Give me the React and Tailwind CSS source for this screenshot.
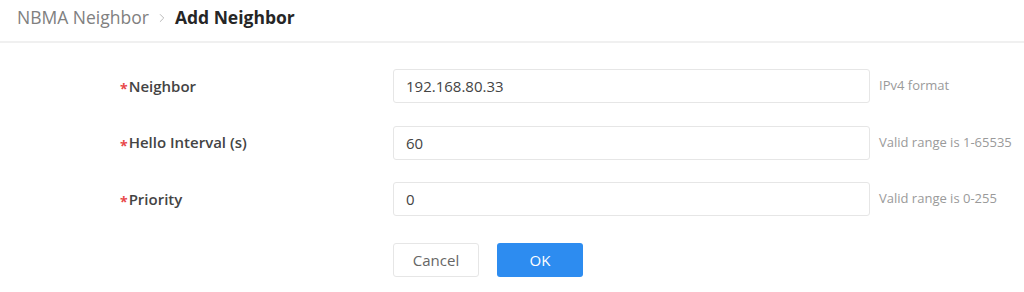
import { ChevronRight } from "lucide-react";

const rows = [
  { label: "Neighbor", value: "192.168.80.33", hint: "IPv4 format" },
  { label: "Hello Interval (s)", value: "60", hint: "Valid range is 1-65535" },
  { label: "Priority", value: "0", hint: "Valid range is 0-255" },
];

const App = () => {
  return (
    <div
      className="w-[1024px] h-[292px] bg-white overflow-hidden"
      style={{ fontFamily: '"Open Sans", "Noto Sans", sans-serif' }}
    >
      {/* Breadcrumb */}
      <div className="h-[43px] border-b-2 border-[#f0f0f0] flex items-center pl-[17px] pb-[6px] text-[17.5px]">
        <span className="text-[#808080]">NBMA Neighbor</span>
        <ChevronRight className="w-[14px] h-[14px] mx-[6px] text-[#b0b0b0]" strokeWidth={1.5} />
        <span className="font-bold text-[#262626]">Add Neighbor</span>
      </div>

      {/* Form */}
      <div className="pt-[26px]">
        {rows.map((row) => (
          <div key={row.label} className="flex items-center h-[34px] mb-[22.5px]">
            <div className="w-[393px] pl-[120px] flex items-center text-[15px] font-semibold text-[#444]">
              <span className="text-[#e8484a] text-[14px] font-bold leading-none mr-[1px] mt-[6px]">*</span>
              <span>{row.label}</span>
            </div>
            <input
              readOnly
              value={row.value}
              className="w-[477px] h-[34px] px-[12px] text-[15px] text-[#444] border border-[#e6e6e6] rounded-[3px] outline-none"
            />
            <span className="ml-[9px] text-[13px] text-[#9a9a9a]">{row.hint}</span>
          </div>
        ))}

        <div className="flex pl-[393px] gap-[18px] mt-[27px]">
          <button className="w-[86px] h-[34px] border border-[#e6e6e6] rounded-[3px] text-[15px] text-[#666] bg-white">
            Cancel
          </button>
          <button className="w-[86px] h-[34px] rounded-[3px] text-[15px] text-white bg-[#2d8cf0]">
            OK
          </button>
        </div>
      </div>
    </div>
  );
};

export default App;
